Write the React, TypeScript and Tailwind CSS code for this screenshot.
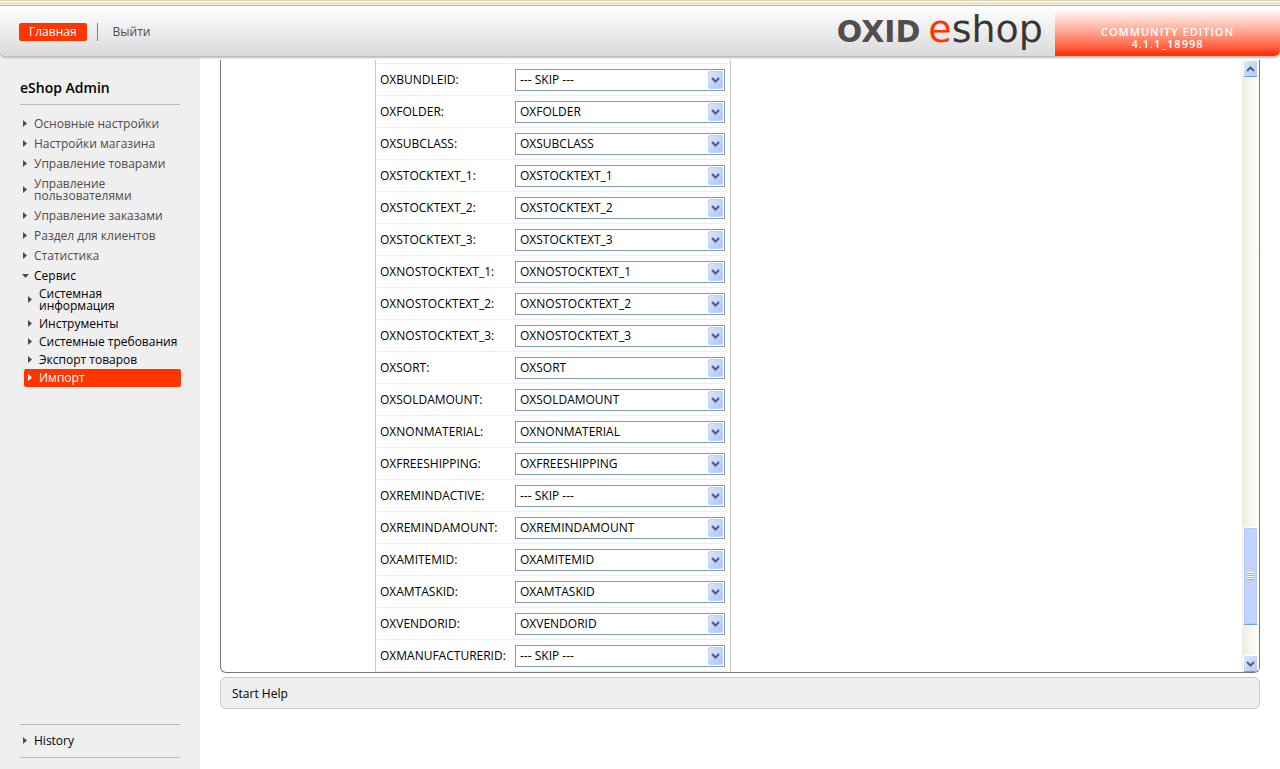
import { useState } from "react";

const mainMenu = [
  "Основные настройки",
  "Настройки магазина",
  "Управление товарами",
  "Управление пользователями",
  "Управление заказами",
  "Раздел для клиентов",
  "Статистика",
];

const serviceMenu = [
  "Системная информация",
  "Инструменты",
  "Системные требования",
  "Экспорт товаров",
  "Импорт",
];

const SKIP = "--- SKIP ---";

const fields = [
  { name: "OXBUNDLEID", value: SKIP },
  { name: "OXFOLDER", value: "OXFOLDER" },
  { name: "OXSUBCLASS", value: "OXSUBCLASS" },
  { name: "OXSTOCKTEXT_1", value: "OXSTOCKTEXT_1" },
  { name: "OXSTOCKTEXT_2", value: "OXSTOCKTEXT_2" },
  { name: "OXSTOCKTEXT_3", value: "OXSTOCKTEXT_3" },
  { name: "OXNOSTOCKTEXT_1", value: "OXNOSTOCKTEXT_1" },
  { name: "OXNOSTOCKTEXT_2", value: "OXNOSTOCKTEXT_2" },
  { name: "OXNOSTOCKTEXT_3", value: "OXNOSTOCKTEXT_3" },
  { name: "OXSORT", value: "OXSORT" },
  { name: "OXSOLDAMOUNT", value: "OXSOLDAMOUNT" },
  { name: "OXNONMATERIAL", value: "OXNONMATERIAL" },
  { name: "OXFREESHIPPING", value: "OXFREESHIPPING" },
  { name: "OXREMINDACTIVE", value: SKIP },
  { name: "OXREMINDAMOUNT", value: "OXREMINDAMOUNT" },
  { name: "OXAMITEMID", value: "OXAMITEMID" },
  { name: "OXAMTASKID", value: "OXAMTASKID" },
  { name: "OXVENDORID", value: "OXVENDORID" },
  { name: "OXMANUFACTURERID", value: SKIP },
];

function RightArrow() {
  return (
    <svg width="5" height="8" viewBox="0 0 5 8" className="shrink-0" fill="currentColor" aria-hidden="true">
      <path d="M0 0L4 3.5L0 7Z" />
    </svg>
  );
}

function Chevron({ up = false }: { up?: boolean }) {
  return (
    <svg width="9" height="6" viewBox="0 0 9 6" fill="none" stroke="#4d6185" strokeWidth="2" aria-hidden="true">
      <path d={up ? "M1 5L4.5 1.5L8 5" : "M1 1L4.5 4.5L8 1"} />
    </svg>
  );
}

function FieldRow({ name, value }: { name: string; value: string }) {
  const [selected, setSelected] = useState(value);
  const options = value === SKIP ? [SKIP, name] : [value, SKIP];
  return (
    <tr>
      <td className="w-[132px] border-b border-[#eeeeee] p-0 pl-[3px]">
        <label htmlFor={name}>{name}:</label>
      </td>
      <td className="border-b border-[#eeeeee] p-0 pl-[5px]">
        <div className="relative flex w-[210px]">
          <select
            id={name}
            value={selected}
            onChange={(e) => setSelected(e.target.value)}
            className="h-[22px] w-full appearance-none border border-[#7f9db9] bg-white pl-1 pr-5"
          >
            {options.map((o) => (
              <option key={o}>{o}</option>
            ))}
          </select>
          <span className="pointer-events-none absolute inset-y-0.5 right-0.5 flex w-[15px] items-center justify-center rounded-xs border border-[#c3d2f8] bg-linear-to-br from-[#dce6ff] to-[#aec4f7]">
            <Chevron />
          </span>
        </div>
      </td>
    </tr>
  );
}

function Scrollbar() {
  return (
    <div className="flex w-[17px] shrink-0 flex-col bg-linear-to-r from-[#eeede5] to-[#fefefb] px-px" aria-hidden="true">
      <div className="flex h-[17px] shrink-0 items-center justify-center rounded-xs border border-white border-b-[#6f9fdb] bg-linear-to-br from-[#dce6ff] to-[#b4c8f8]">
        <Chevron up />
      </div>
      <div className="grow-[450]" />
      <div className="flex h-[98px] shrink-0 items-center justify-center rounded-xs border border-white border-b-[#6f9fdb] bg-[#c3d3fd] shadow-[inset_0_0_0_1px_#b7caf5]">
        <span className="h-2 w-[7px] bg-[repeating-linear-gradient(to_bottom,#ffffff_0px,#ffffff_1px,#8cb0f8_1px,#8cb0f8_2px)]" />
      </div>
      <div className="grow-[30]" />
      <div className="flex h-[17px] shrink-0 items-center justify-center rounded-xs border border-white border-b-[#6f9fdb] bg-linear-to-br from-[#dce6ff] to-[#b4c8f8]">
        <Chevron />
      </div>
    </div>
  );
}

function Header() {
  return (
    <header className="relative shrink-0 bg-[linear-gradient(to_right,#efefef_200px,#ffffff_200px)]">
      <div className="h-[6px] border-b border-[#c5c1b0] bg-[linear-gradient(to_bottom,#d9d0b4_1px,#ffffff_1px,#ffffff_2px,#ece9d8_2px)]" />
      <div className="flex h-[50px] items-stretch overflow-hidden rounded-b-md bg-linear-to-b from-white to-[#dadada] shadow-[0_1px_2px_1px_#bbbbbb]">
        <nav className="flex grow items-center pl-[19px] pt-0.5 text-[12px] font-medium leading-none">
          <a href="#home" className="flex h-[18px] items-center rounded-xs bg-[#ff3600] px-[10px] text-white">
            Главная
          </a>
          <span className="ml-[10px] h-[18px] w-px bg-[#7d7d7d]" />
          <a href="#logout" className="ml-[15px] text-[#4f4b4b]">
            Выйти
          </a>
        </nav>
        <div className="mr-3 flex items-baseline gap-2 whitespace-nowrap font-['DejaVu_Sans',sans-serif] leading-[46px]">
          <span className="text-[30px] font-bold text-[#524d4e]">OXID</span>
          <span className="text-[38px] text-[#393536]">
            <span className="text-[#ff3600]">e</span>shop
          </span>
        </div>
        <p className="w-[225px] bg-linear-to-b from-white from-5% to-[#ff3300] to-95% pt-5 text-center text-[11px] font-semibold leading-3 tracking-[1px] text-white">
          COMMUNITY EDITION
          <br />
          4.1.1_18998
        </p>
      </div>
    </header>
  );
}

function Sidebar() {
  return (
    <aside className="flex w-[200px] shrink-0 flex-col bg-[#efefef] px-5 pb-[11px] pt-6 text-[12px] font-medium leading-3 text-[#4f4b4b]">
      <h1 className="border-b border-[#bcbcbc] pb-[8px] text-[14px] font-semibold leading-4 text-black">eShop Admin</h1>
      <ul className="mt-[13px] flex flex-col gap-2 pl-[3px]">
        {mainMenu.map((item) => (
          <li key={item}>
            <a href="#menu" className="flex items-center gap-[6px]">
              <RightArrow />
              {item}
            </a>
          </li>
        ))}
        <li>
          <a href="#service" className="-ml-px flex items-center gap-[5px] text-black">
            <svg width="7" height="4" viewBox="0 0 7 4" fill="#4f4b4b" aria-hidden="true">
              <path d="M0 0H7L3.5 4Z" />
            </svg>
            Сервис
          </a>
          <ul className="mt-[3px] -mr-px flex flex-col text-black">
            {serviceMenu.map((item) => (
              <li key={item} className="pl-px">
                <a
                  href="#service-item"
                  className={
                    item === "Импорт"
                      ? "flex items-center gap-[6px] rounded-xs bg-[#ff3600] py-[3px] pl-1 text-white"
                      : item === "Системная информация"
                        ? "flex items-center gap-[6px] py-[3px] pl-1 pr-8"
                        : "flex items-center gap-[6px] whitespace-nowrap py-[3px] pl-1"
                  }
                >
                  <span className={item === "Импорт" ? "text-white" : "text-[#4f4b4b]"}>
                    <RightArrow />
                  </span>
                  {item}
                </a>
              </li>
            ))}
          </ul>
        </li>
      </ul>
      <a
        href="#history"
        className="mt-auto flex h-[34px] shrink-0 items-center gap-[6px] border-y border-[#bcbcbc] pl-[3px]"
      >
        <RightArrow />
        <span className="text-black">History</span>
      </a>
    </aside>
  );
}

export default function App() {
  return (
    <div className="flex h-screen flex-col bg-white font-['Open_Sans','Noto_Sans',sans-serif] text-[12px] leading-4 text-black">
      <Header />
      <div className="flex min-h-0 grow">
        <Sidebar />
        <main className="flex min-w-0 grow flex-col px-5 pb-[60px] pt-1">
          <section className="flex min-h-0 grow overflow-hidden rounded-b-md border border-t-0 border-[#777777]">
            <div className="min-w-0 grow overflow-hidden pl-[154px]">
              <div className="w-[356px] border-x border-[#c8c8c8] pt-[2px]">
                <table className="w-full border-separate border-spacing-x-px border-spacing-y-0">
                  <tbody>
                    <tr>
                      <td className="h-0.5 border-b border-[#eeeeee] p-0" />
                      <td className="h-0.5 border-b border-[#eeeeee] p-0" />
                    </tr>
                  </tbody>
                  <tbody className="[&>tr]:h-8">
                    {fields.map((f) => (
                      <FieldRow key={f.name} {...f} />
                    ))}
                  </tbody>
                </table>
              </div>
            </div>
            <Scrollbar />
          </section>
          <footer className="mt-1 flex h-8 shrink-0 items-center rounded-md border border-[#c8c8c8] bg-[#efefef] px-[11px] pt-0.5">
            Start Help
          </footer>
        </main>
      </div>
    </div>
  );
}
